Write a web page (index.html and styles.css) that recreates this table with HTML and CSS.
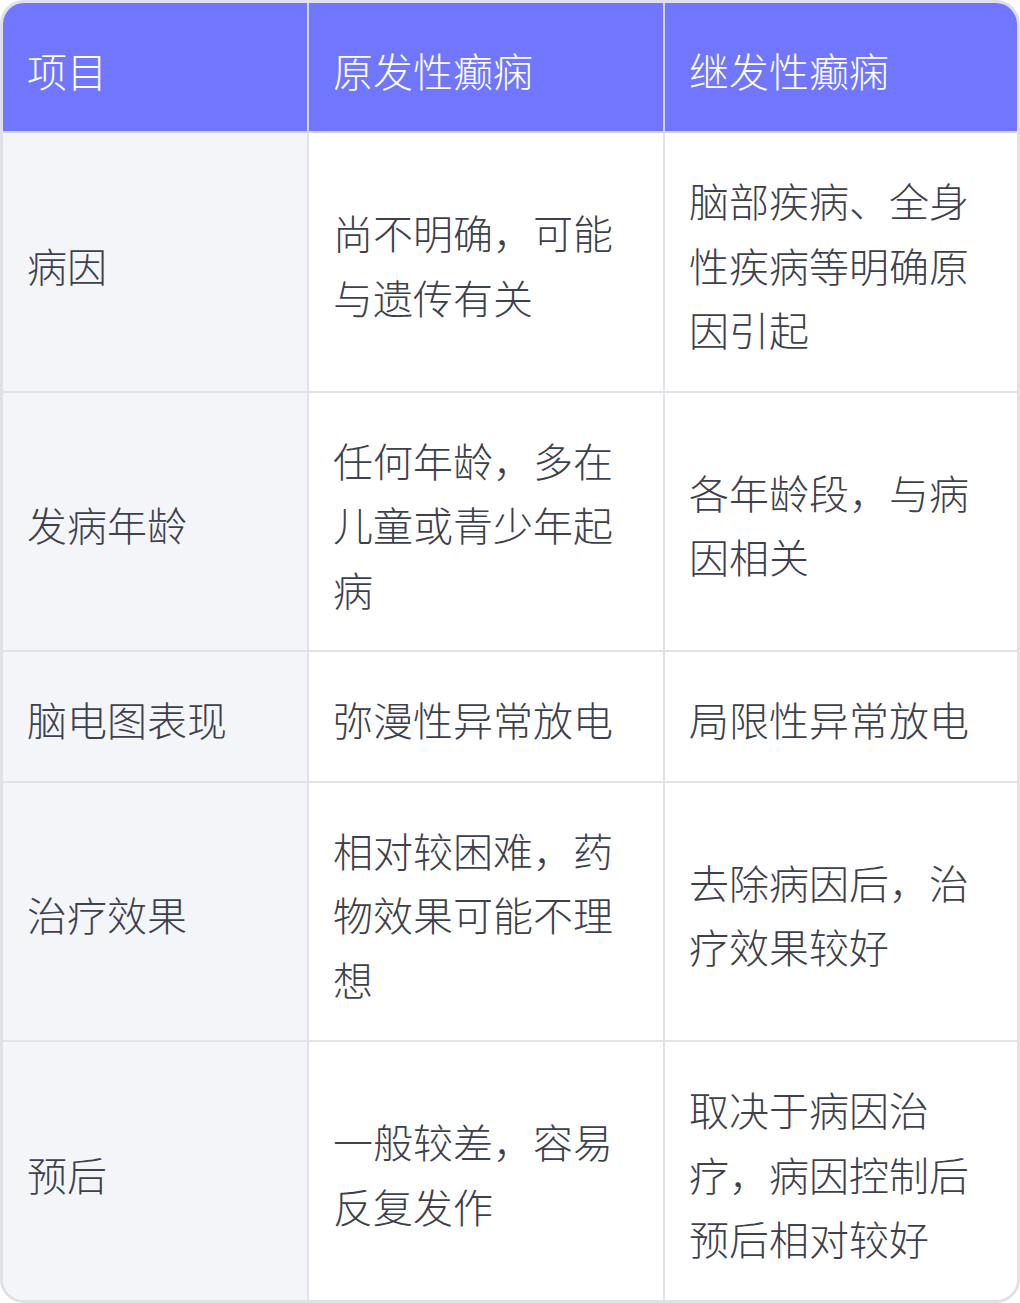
FILE: index.html
```html
<!DOCTYPE html>
<html lang="zh-CN">
<head>
<meta charset="utf-8">
<link rel="stylesheet" href="styles.css">
</head>
<body>
<div class="card">
<table class="cmp">
<colgroup><col class="c1"><col class="c2"><col class="c3"></colgroup>
<thead>
<tr><th>项目</th><th>原发性癫痫</th><th>继发性癫痫</th></tr>
</thead>
<tbody>
<tr><td>病因</td><td>尚不明确，可能与遗传有关</td><td>脑部疾病、全身性疾病等明确原因引起</td></tr>
<tr><td>发病年龄</td><td>任何年龄，多在儿童或青少年起病</td><td>各年龄段，与病因相关</td></tr>
<tr><td>脑电图表现</td><td>弥漫性异常放电</td><td>局限性异常放电</td></tr>
<tr><td>治疗效果</td><td>相对较困难，药物效果可能不理想</td><td>去除病因后，治疗效果较好</td></tr>
<tr><td>预后</td><td>一般较差，容易反复发作</td><td>取决于病因治疗，病因控制后预后相对较好</td></tr>
</tbody>
</table>
</div>
</body>
</html>
```
FILE: styles.css
```css
html, body { margin: 0; padding: 0; background: #ffffff; }
.card {
  width: 1020px;
  box-sizing: border-box;
  border: 3px solid #e0e1e6;
  border-radius: 24px;
  overflow: hidden;
  font-family: "Noto Sans CJK SC", "Noto Sans", sans-serif;
  font-weight: 300;
}
.cmp {
  width: 100%;
  table-layout: fixed;
  border-collapse: separate;
  border-spacing: 0;
}
.c1 { width: 306px; }
.c2 { width: 356px; }
.c3 { width: 352px; }
.cmp th, .cmp td {
  padding: 35px 24px 29px;
  font-size: 40px;
  line-height: 64.5px;
  text-align: left;
  vertical-align: middle;
  border-right: 2px solid #e2e3e8;
  border-bottom: 2px solid #e2e3e8;
  word-break: break-all;
}
.cmp th:last-child, .cmp td:last-child { border-right: none; }
.cmp tbody tr:last-child td { border-bottom: none; }
.cmp th {
  background: #7176fe;
  color: #ffffff;
  font-weight: 300;
  line-height: 64px;
  border-right-color: #d6d8f2;
  border-bottom-color: #d3d5ee;
}
.cmp td { color: #3d414d; background: #ffffff; }
.cmp td:first-child { background: #f4f5f9; }
```
